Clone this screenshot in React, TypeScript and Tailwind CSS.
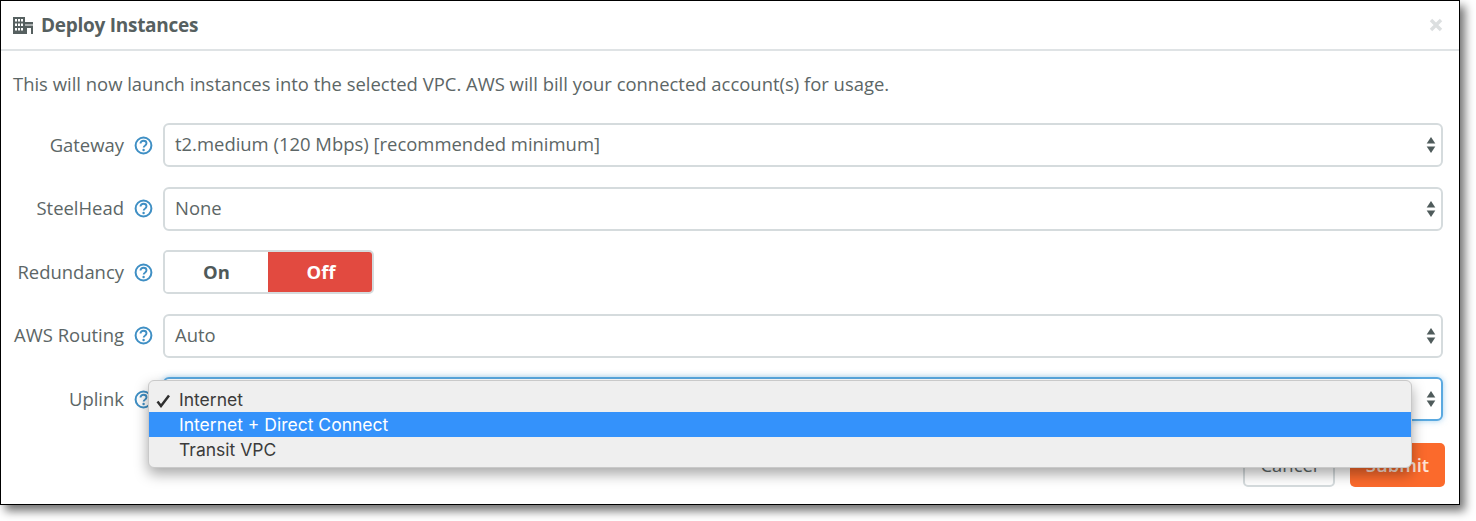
import React from "react";

const font = "font-['Open_Sans',sans-serif]";

function Help() {
  return (
    <svg width="19" height="19" viewBox="0 0 19 19" className="shrink-0">
      <circle cx="9.5" cy="9.5" r="7.9" fill="none" stroke="#3f8fc4" strokeWidth="2" />
      <path d="M6.5 7.6c0-1.7 1.3-2.8 3-2.8s3 1 3 2.5c0 1.2-.7 1.8-1.6 2.4-.8.5-1.2.9-1.2 1.8" fill="none" stroke="#3f8fc4" strokeWidth="1.9" />
      <circle cx="9.6" cy="14" r="1.2" fill="#3f8fc4" />
    </svg>
  );
}

function Arrows() {
  return (
    <svg width="10" height="18" viewBox="0 0 10 18" className="shrink-0">
      <path d="M5 1 L9.3 7.6 H.7 Z" fill="#4f5b5b" />
      <path d="M5 17 L9.3 10.4 H.7 Z" fill="#4f5b5b" />
    </svg>
  );
}

function Row({ label, children }: { label: string; children: React.ReactNode }) {
  return (
    <div className="flex items-center">
      <div className="flex w-[162px] shrink-0 items-center justify-end gap-[10px] pr-[10px]">
        <span className="text-[18.45px] leading-none text-[#5c6666]">{label}</span>
        <Help />
      </div>
      {children}
    </div>
  );
}

function Select({ value, focus }: { value?: string; focus?: boolean }) {
  return (
    <div
      className={
        "flex h-[44px] w-[1280px] items-center justify-between rounded-[6px] border-2 bg-white pl-[10px] pr-[5px] text-[18.45px] text-[#5c6666] " +
        (focus ? "border-[#5aa9e0] shadow-[0_0_6px_rgba(90,169,224,0.55)]" : "border-[#d5dbdd]")
      }
    >
      <span className="-mt-[2px]">{value}</span>
      <Arrows />
    </div>
  );
}

export default function App() {
  return (
    <div className={"h-[521px] w-[1476px] bg-white " + font}>
      <div className="relative flex h-[505px] w-[1460px] flex-col border border-black bg-white shadow-[5px_6px_9px_rgba(0,0,0,0.55)]">
        <div className="flex h-[50px] shrink-0 items-center justify-between border-b-2 border-[#dfe3e5] pl-[12px] pr-[16px]">
          <div className="flex items-center gap-[8px]">
            <svg width="20" height="19" viewBox="0 0 20 19">
              <path fill="#566060" d="M0 1h12v17H0z" />
              <path fill="#fff" d="M2 3h2v2.4H2zM5 3h2v2.4H5zM8 3h2v2.4H8zM2 7.5h2v2.4H2zM5 7.5h2v2.4H5zM8 7.5h2v2.4H8zM2 12h2v2.4H2zM5 12h2v2.4H5zM8 12h2v2.4H8z" />
              <path fill="#566060" d="M12 6h8v2.6h-8zM12 9.5h8V18h-2v-6h-4v6h-2z" />
            </svg>
            <span className="text-[19px] font-bold leading-none tracking-[-0.27px] text-[#566060]">Deploy Instances</span>
          </div>
          <svg width="14" height="14" viewBox="0 0 14 14">
            <path d="M2 2 L12 12 M12 2 L2 12" stroke="#dcdfe0" strokeWidth="3.4" />
          </svg>
        </div>

        <p className="mt-[21px] pl-[12px] text-[18.45px] leading-[24px] text-[#5c6666]">
          This will now launch instances into the selected VPC. AWS will bill your connected account(s) for usage.
        </p>

        <div className="mt-[27px] flex flex-col gap-[19.5px]">
          <Row label="Gateway"><Select value="t2.medium (120 Mbps) [recommended minimum]" /></Row>
          <Row label="SteelHead"><Select value="None" /></Row>
          <Row label="Redundancy">
            <div className="flex h-[44px] w-[211px] overflow-hidden rounded-[5px] border-2 border-[#d5dbdd] text-[18.45px] font-bold">
              <div className="flex w-[103px] items-center justify-center bg-white text-[#4f5959]">On</div>
              <div className="-my-[2px] -mr-[2px] flex flex-1 items-center justify-center rounded-r-[5px] bg-[#e24a40] text-white shadow-[inset_0_2px_1px_rgba(0,0,0,0.12)]">Off</div>
            </div>
          </Row>
          <Row label="AWS Routing"><Select value="Auto" /></Row>
          <Row label="Uplink"><Select focus /></Row>
        </div>

        <div className="mt-[22px] flex justify-end gap-[15px] pr-[14px]">
          <div className="flex h-[44px] w-[92px] items-center justify-center rounded-[5px] border-2 border-[#d5dbdd] bg-white text-[18.45px] text-[#5c6666]">Cancel</div>
          <div className="flex h-[44px] w-[95px] items-center justify-center rounded-[5px] bg-[#fb6a2c] text-[18.45px] font-semibold text-[#ffe3d6]">Submit</div>
        </div>

        <div className="absolute left-[147px] top-[379px] w-[1264px] overflow-hidden rounded-[6px] border border-[#c9c9c9] bg-[#efefef] pb-[5px] pt-[6px] font-['Inter',sans-serif] text-[17.5px] text-[#3b3b3b] shadow-[0_6px_14px_rgba(0,0,0,0.35)]">
          <div className="relative flex h-[25px] items-center pl-[30px] pt-[2px]">
            <svg width="15" height="14" viewBox="0 0 15 14" className="absolute left-[7px] top-[7px]">
              <path d="M1.5 7.5 L5 12 L13 1.5" fill="none" stroke="#2f2f2f" strokeWidth="2.5" />
            </svg>
            Internet
          </div>
          <div className="flex h-[25px] items-center bg-[#3492fb] pl-[30px] pt-[1px] text-white">Internet + Direct Connect</div>
          <div className="flex h-[25px] items-center pl-[30px] pt-[2px]">Transit VPC</div>
        </div>
      </div>
    </div>
  );
}
